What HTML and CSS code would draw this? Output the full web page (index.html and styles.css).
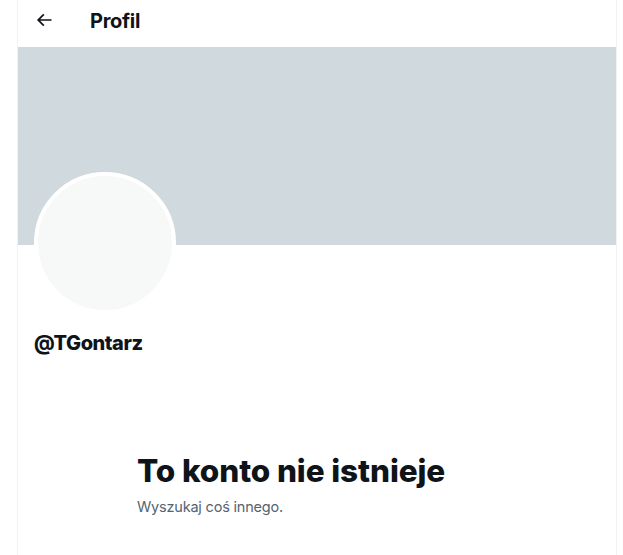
FILE: index.html
```html
<!DOCTYPE html>
<html lang="pl">
<head>
<meta charset="utf-8">
<link rel="stylesheet" href="styles.css">
</head>
<body>
<main class="column">
  <header class="topbar">
    <div class="back">
      <svg viewBox="0 0 24 24" width="20" height="20" aria-hidden="true"><path d="M7.414 13l5.043 5.04-1.414 1.42L3.586 12l7.457-7.46 1.414 1.42L7.414 11H21v2H7.414z"/></svg>
    </div>
    <h1 class="title">Profil</h1>
  </header>
  <div class="banner"></div>
  <div class="profile">
    <div class="avatar"></div>
    <div class="handle">@TGontarz</div>
  </div>
  <section class="empty">
    <h2 class="empty-title">To konto nie istnieje</h2>
    <p class="empty-sub">Wyszukaj coś innego.</p>
  </section>
</main>
</body>
</html>
```
FILE: styles.css
```css
html, body {
  margin: 0;
  padding: 0;
  background: #ffffff;
}
body {
  font-family: "Inter", "Liberation Sans", sans-serif;
  color: #0f1419;
  height: 555px;
  overflow: hidden;
}
.column {
  margin-left: 17px;
  width: 598px;
  min-height: 555px;
  border-left: 1px solid #eff3f4;
  border-right: 1px solid #eff3f4;
  display: flex;
  flex-direction: column;
}
.topbar {
  height: 47px;
  display: flex;
  align-items: center;
  padding-left: 16px;
  box-sizing: border-box;
}
.back {
  width: 20px;
  height: 20px;
  display: flex;
  align-items: center;
  justify-content: center;
  margin-top: -7px;
}
.back svg { fill: #0f1419; }
.title {
  margin: 0 0 0 36px;
  font-size: 20px;
  font-weight: 700;
  line-height: 24px;
  margin-top: -6px;
  letter-spacing: -0.3px;
}
.banner {
  height: 198px;
  background: #cfd9de;
}
.profile {
  padding: 0 16px;
  position: relative;
  height: 150px;
}
.avatar {
  position: absolute;
  left: 16px;
  top: -73px;
  width: 134px;
  height: 134px;
  border-radius: 50%;
  background: #f7f9f9;
  border: 4px solid #ffffff;
}
.handle {
  padding-top: 86px;
  font-size: 20px;
  font-weight: 800;
  line-height: 24px;
  letter-spacing: -0.45px;
}
.empty {
  padding: 58px 0 0 119px;
}
.empty-title {
  margin: 0;
  font-size: 31.5px;
  font-weight: 800;
  line-height: 36px;
  letter-spacing: -0.1px;
}
.empty-sub {
  margin: 8px 0 0;
  font-size: 14.5px;
  line-height: 20px;
  color: #536471;
  letter-spacing: -0.2px;
}
```
